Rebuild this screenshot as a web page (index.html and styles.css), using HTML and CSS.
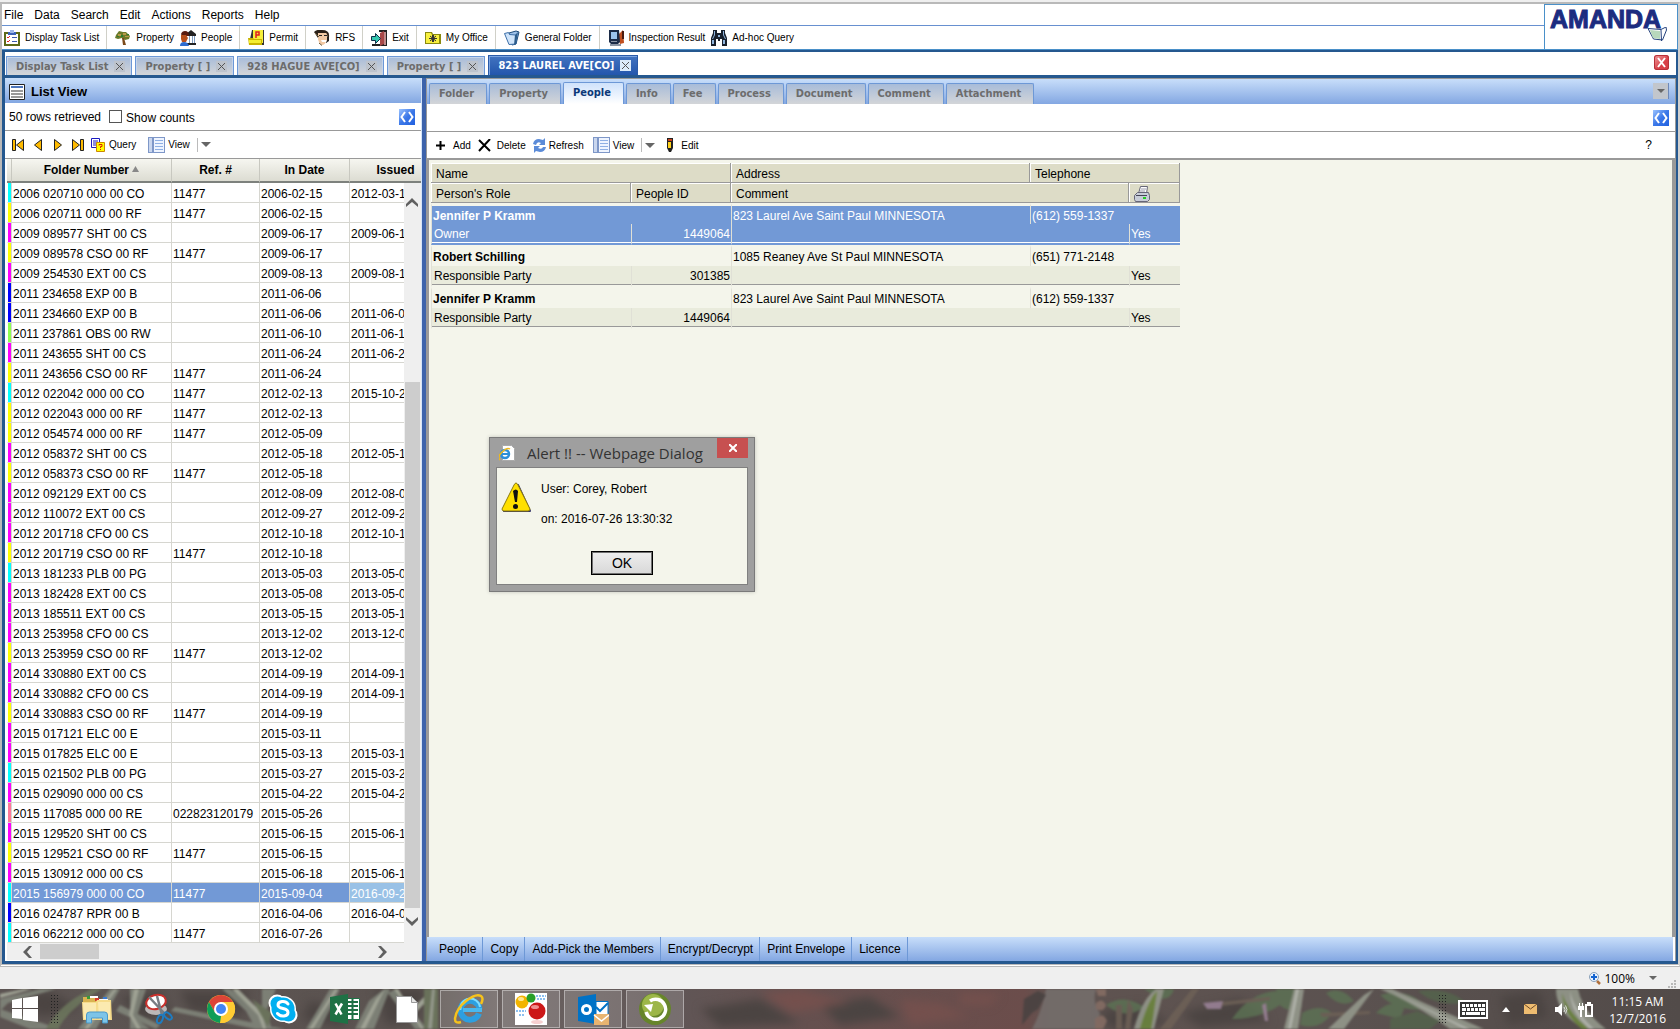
FILE: index.html
```html
<!DOCTYPE html>
<html lang="en">

<head>
    <meta charset="UTF-8">
    <meta name="viewport" content="width=device-width, initial-scale=1.0">
    <title>AMANDA</title>
    <link rel="stylesheet" href="styles.css">
</head>

<body>
    <div class="window">
        <header class="top">
            <div class="top-bars">
                <nav class="menu">
                    <button>File</button>
                    <button>Data</button>
                    <button>Search</button>
                    <button>Edit</button>
                    <button>Actions</button>
                    <button>Reports</button>
                    <button>Help</button>
                </nav>
                <div class="toolbar">
                    <div class="group">
                        <button><svg class="icon" viewBox="0 0 16 16"><path fill="#5d6b18" d="M0 2h16v14H0z"/><path fill="#fff" d="M2 4h12v10H2z"/><path fill="#3b62b8" d="M4 2h8v3H4z"/><path fill="#9db6e8" d="M6 0h4v3H6z"/><path fill="none" stroke="#d22" d="M3 7l1 1 2-2M3 11l1 1 2-2"/><path stroke="#3a5ab0" fill="none" d="M8 7.500h5M8 11.500h5"/></svg>Display Task List</button>
                    </div>
                    <div class="group">
                        <button><svg class="icon" viewBox="0 0 16 16"><path fill="#6b7a2a" d="M1 5l3-4 4 1 3 0 4 4-1 3-4 1-3-2-4 1-3-1z"/><path fill="#b79a4a" d="M3 4h3v2H3zM8 3h3v2H8zM10 6h4v1h-4z"/><path fill="#2e7c2e" d="M6 5h2v2H6zM12 4h2v1h-2zM2 6h2v1H2z"/><path fill="#7a4a1c" d="M7 8h2l2 7H8z"/></svg>Property</button>
                        <button><svg class="icon" viewBox="0 0 16 16"><path fill="#222" d="M6 4l5-4 5 4v2H6zM7 13h9v2H7z"/><path fill="#7f9cc0" d="M9 6h1v7H9zM12 6h1v7h-1zM14 6h1v7h-1z"/><path fill="#5a1c10" d="M1 4q1-3 4-3 4 0 4 5H2z"/><path fill="#b8501c" d="M1 5h5l2 3-2 4H2l-1-3z"/><path fill="#2d6cd0" d="M0 16q0-4 4-4t5 4z"/></svg>People</button>
                    </div>
                    <div class="group">
                        <button><svg class="icon" viewBox="0 0 16 16"><path fill="#333" d="M4 0h12v15H2V9z"/><path fill="#f6ef3a" d="M5 0h10v13H5z"/><path fill="#c9b400" d="M0 8h5l1 1h8v6H1z"/><path fill="#f4ee30" d="M1 10h12v3H1z"/><path fill="none" stroke="#e02020" stroke-width="1.500" d="M8 8V2h3v3H8"/></svg>Permit</button>
                    </div>
                    <div class="group">
                        <button><svg class="icon" viewBox="0 0 16 16"><path fill="#2a2018" d="M0 2q3-3 8-2 8 0 7 7l-2 3-9-2z"/><path fill="#f0c8a4" d="M4 3h8q2 1 1 7-2 5-5 5-3-1-4-6z"/><path fill="#222" d="M5 5h3v1H5zM10 5h3v1h-3zM13 7h2v4l-3 2v-1l1-1z"/><path fill="#fff" d="M7 10h5v2H8z"/><path fill="none" stroke="#6a5a3a" d="M1 3l4 4M5 13l3 2.500"/></svg>RFS</button>
                    </div>
                    <div class="group">
                        <button><svg class="icon" viewBox="0 0 16 16"><path fill="#222" d="M8 0h8v16h-2V2H8zM1 14h15v2H1z"/><path fill="#c08a8a" d="M13 2h2v13h-2z"/><path fill="#a84848" d="M9 3l4-2v13l-4 2z"/><path fill="#35c8b0" stroke="#10304a" d="M.5 6.500h4v-3l5 5-5 5v-3h-4z"/></svg>Exit</button>
                    </div>
                    <div class="group">
                        <button><svg class="icon" viewBox="0 0 16 16"><path fill="#8a8a10" d="M0 2h7l1 2h8v10H0z"/><path fill="#f8f040" d="M1 3h5l1 2h7v8H1z"/><path fill="#333" d="M4 8h8v1H4zM7 5h2v7H7z"/><path stroke="#333" d="M5 6l6 5M11 6l-6 5"/></svg>My Office</button>
                    </div>
                    <div class="group">
                        <button><svg class="icon" viewBox="0 0 16 16"><path fill="#9cc0e8" stroke="#1c4a7a" d="M5 3l7-2 3 1-3 12-4 1z"/><path fill="#cfe4fa" stroke="#3c6ea8" d="M.5 3.500l4-1 1 2 6 .5.500 9-7 .5z"/><path fill="#2b5c8c" d="M11 5l3-3-2 12-2 1z"/></svg>General Folder</button>
                    </div>
                    <div class="group">
                        <button><svg class="icon" viewBox="0 0 16 16"><path fill="#c05020" d="M10 5l5-5 1 13-4 1z"/><path fill="#4a1c10" d="M14 1h2v8h-2z"/><path fill="#1c2c48" d="M1 0h10l1 12-2 2H3l-2-2z"/><path fill="#9cc4ee" d="M3 2h6v7H3z"/><path fill="#8a94a4" d="M3 11h6v1H3zM2 14h11v2H2z"/></svg>Inspection Result</button>
                        <button><svg class="icon" viewBox="0 0 16 16"><path fill="#18202c" d="M2 0h4v3h4V0h4v3l2 5v8h-5V9H9v2H7V9H5v7H0V8l2-5z"/><path fill="#8fb4dc" d="M3 1h1v4l-2 4H1l2-4zM12 1h1v4l2 4h-1l-2-4zM1 10h2v4H1zM12 10h2v4h-2zM7 5h2v2H7z"/></svg>Ad-hoc Query</button>
                    </div>
                </div>
            </div>
            <div class="brand">
                <span class="brand-name">AMANDA</span>
                <svg class="brand-mark" viewBox="0 0 20 15"><path fill="#fff" stroke="#23407c" d="M1 1.500l13 1 5-2.500.5 3-4 10-9-1z"/><path fill="#b8d8bc" d="M3 3l10 1v8l-7-1z"/><path fill="none" stroke="#23407c" d="M14 3l.5 11"/></svg>
            </div>
        </header>

        <div class="frame">
            <div class="doc-tabs">
                <div class="doc-tab"><a href="#">Display Task List</a><button class="tab-close" aria-label="Close Display Task List"></button></div>
                <div class="doc-tab"><a href="#">Property [ ]</a><button class="tab-close" aria-label="Close Property"></button></div>
                <div class="doc-tab"><a href="#">928 HAGUE AVE[CO]</a><button class="tab-close" aria-label="Close 928 HAGUE AVE"></button></div>
                <div class="doc-tab"><a href="#">Property [ ]</a><button class="tab-close" aria-label="Close Property"></button></div>
                <div class="doc-tab active"><a href="#">823 LAUREL AVE[CO]</a><button class="tab-close" aria-label="Close 823 LAUREL AVE"></button></div>
                <button class="close-all" aria-label="Close all"><svg viewBox="0 0 15 15"><path stroke="#fff" stroke-width="2" d="M4 3l7 9M11 3l-7 9"/></svg></button>
            </div>

            <div class="panels">
                <!-- folder list -->
                <section class="list-panel">
                    <h2 class="panel-title"><svg viewBox="0 0 16 16"><path fill="#fff" stroke="#222" d="M.5.5h15v15H.5z"/><path fill="#4d76bd" d="M2 2h12v2H2z"/><path fill="#999" d="M2 6h12v2H2zM2 9h12v2H2zM2 12h12v2H2z"/></svg>List View</h2>
                    <div class="info-row">
                        <span>50 rows retrieved</span>
                        <input type="checkbox" id="counts">
                        <label for="counts">Show counts</label>
                        <button class="expand" aria-label="Expand"><svg viewBox="0 0 16 16"><path fill="none" stroke="#fff" stroke-width="2" d="M6 3L2.500 8 6 13M10 3l3.500 5-3.500 5"/></svg></button>
                    </div>
                    <div class="tools">
                        <button aria-label="First"><svg class="nav" viewBox="0 0 14 14"><path fill="#fb0" stroke="#222" d="M1.500 1.500h3v11h-3zM12.500 1.500v11L5.500 7z"/></svg></button>
                        <button aria-label="Previous"><svg class="nav" viewBox="0 0 14 14"><path fill="#fb0" stroke="#222" d="M10.500 1.500v11L3.500 7z"/></svg></button>
                        <button aria-label="Next"><svg class="nav" viewBox="0 0 14 14"><path fill="#fb0" stroke="#222" d="M3.500 1.500v11l7-5.500z"/></svg></button>
                        <button aria-label="Last"><svg class="nav" viewBox="0 0 14 14"><path fill="#fb0" stroke="#222" d="M1.500 1.500v11l7-5.500zM9.500 1.500h3v11h-3z"/></svg></button>
                        <button class="query"><svg viewBox="0 0 14 14"><path fill="#fff" stroke="#1a1ac0" d="M.5.5h8v9h-8z"/><path stroke="#1a1ac0" d="M2 3h5M2 5h5M2 7h3"/><path fill="#ff0" stroke="#c80" d="M5.500 4.500h8v9h-8z"/><path fill="none" stroke="#d20" d="M8 7.500V6.500h3v2H9.500v1.500M9.500 11v1"/></svg>Query</button>
                        <button class="view"><svg class="view-icon" viewBox="0 0 17 16"><path fill="#7e97c8" d="M0 0h17v16H0z"/><path fill="#c9d6ee" d="M1 1h3v14H1z"/><path fill="#eef4ff" d="M6 1h10v14H6z"/><path stroke="#8fb0e4" d="M7 3.500h8M7 6.500h8M7 9.500h8M7 12.500h8"/></svg>View</button>
                        <button class="drop" aria-label="View options"></button>
                    </div>
                    <div class="list">
                        <table class="folders">
                            <colgroup><col class="c-flag"><col class="c-num"><col class="c-ref"><col class="c-date"><col class="c-issued"></colgroup>
                            <thead>
                                <tr><th></th><th>Folder Number <svg class="sort" viewBox="0 0 7 6"><path fill="#888" d="M3.500 0L7 6H0z"/></svg></th><th>Ref. #</th><th>In Date</th><th>Issued</th></tr>
                            </thead>
                            <tbody>
                                <tr class="cyan"><td></td><td>2006 020710 000 00 CO</td><td>11477</td><td>2006-02-15</td><td>2012-03-13</td></tr>
                                <tr class="yellow"><td></td><td>2006 020711 000 00 RF</td><td>11477</td><td>2006-02-15</td><td></td></tr>
                                <tr class="magenta"><td></td><td>2009 089577 SHT 00 CS</td><td></td><td>2009-06-17</td><td>2009-06-17</td></tr>
                                <tr class="yellow"><td></td><td>2009 089578 CSO 00 RF</td><td>11477</td><td>2009-06-17</td><td></td></tr>
                                <tr class="magenta"><td></td><td>2009 254530 EXT 00 CS</td><td></td><td>2009-08-13</td><td>2009-08-13</td></tr>
                                <tr class="blue"><td></td><td>2011 234658 EXP 00 B</td><td></td><td>2011-06-06</td><td></td></tr>
                                <tr class="blue"><td></td><td>2011 234660 EXP 00 B</td><td></td><td>2011-06-06</td><td>2011-06-06</td></tr>
                                <tr class="green"><td></td><td>2011 237861 OBS 00 RW</td><td></td><td>2011-06-10</td><td>2011-06-10</td></tr>
                                <tr class="magenta"><td></td><td>2011 243655 SHT 00 CS</td><td></td><td>2011-06-24</td><td>2011-06-24</td></tr>
                                <tr class="yellow"><td></td><td>2011 243656 CSO 00 RF</td><td>11477</td><td>2011-06-24</td><td></td></tr>
                                <tr class="cyan"><td></td><td>2012 022042 000 00 CO</td><td>11477</td><td>2012-02-13</td><td>2015-10-20</td></tr>
                                <tr class="yellow"><td></td><td>2012 022043 000 00 RF</td><td>11477</td><td>2012-02-13</td><td></td></tr>
                                <tr class="yellow"><td></td><td>2012 054574 000 00 RF</td><td>11477</td><td>2012-05-09</td><td></td></tr>
                                <tr class="magenta"><td></td><td>2012 058372 SHT 00 CS</td><td></td><td>2012-05-18</td><td>2012-05-18</td></tr>
                                <tr class="yellow"><td></td><td>2012 058373 CSO 00 RF</td><td>11477</td><td>2012-05-18</td><td></td></tr>
                                <tr class="magenta"><td></td><td>2012 092129 EXT 00 CS</td><td></td><td>2012-08-09</td><td>2012-08-09</td></tr>
                                <tr class="magenta"><td></td><td>2012 110072 EXT 00 CS</td><td></td><td>2012-09-27</td><td>2012-09-27</td></tr>
                                <tr class="magenta"><td></td><td>2012 201718 CFO 00 CS</td><td></td><td>2012-10-18</td><td>2012-10-18</td></tr>
                                <tr class="yellow"><td></td><td>2012 201719 CSO 00 RF</td><td>11477</td><td>2012-10-18</td><td></td></tr>
                                <tr class="cyan"><td></td><td>2013 181233 PLB 00 PG</td><td></td><td>2013-05-03</td><td>2013-05-03</td></tr>
                                <tr class="magenta"><td></td><td>2013 182428 EXT 00 CS</td><td></td><td>2013-05-08</td><td>2013-05-08</td></tr>
                                <tr class="magenta"><td></td><td>2013 185511 EXT 00 CS</td><td></td><td>2013-05-15</td><td>2013-05-15</td></tr>
                                <tr class="magenta"><td></td><td>2013 253958 CFO 00 CS</td><td></td><td>2013-12-02</td><td>2013-12-02</td></tr>
                                <tr class="yellow"><td></td><td>2013 253959 CSO 00 RF</td><td>11477</td><td>2013-12-02</td><td></td></tr>
                                <tr class="magenta"><td></td><td>2014 330880 EXT 00 CS</td><td></td><td>2014-09-19</td><td>2014-09-19</td></tr>
                                <tr class="magenta"><td></td><td>2014 330882 CFO 00 CS</td><td></td><td>2014-09-19</td><td>2014-09-19</td></tr>
                                <tr class="yellow"><td></td><td>2014 330883 CSO 00 RF</td><td>11477</td><td>2014-09-19</td><td></td></tr>
                                <tr class="magenta"><td></td><td>2015 017121 ELC 00 E</td><td></td><td>2015-03-11</td><td></td></tr>
                                <tr class="magenta"><td></td><td>2015 017825 ELC 00 E</td><td></td><td>2015-03-13</td><td>2015-03-13</td></tr>
                                <tr class="cyan"><td></td><td>2015 021502 PLB 00 PG</td><td></td><td>2015-03-27</td><td>2015-03-27</td></tr>
                                <tr class="magenta"><td></td><td>2015 029090 000 00 CS</td><td></td><td>2015-04-22</td><td>2015-04-22</td></tr>
                                <tr class="pink"><td></td><td>2015 117085 000 00 RE</td><td>022823120179</td><td>2015-05-26</td><td></td></tr>
                                <tr class="magenta"><td></td><td>2015 129520 SHT 00 CS</td><td></td><td>2015-06-15</td><td>2015-06-15</td></tr>
                                <tr class="yellow"><td></td><td>2015 129521 CSO 00 RF</td><td>11477</td><td>2015-06-15</td><td></td></tr>
                                <tr class="magenta"><td></td><td>2015 130912 000 00 CS</td><td></td><td>2015-06-18</td><td>2015-06-18</td></tr>
                                <tr class="cyan selected"><td></td><td>2015 156979 000 00 CO</td><td>11477</td><td>2015-09-04</td><td>2016-09-20</td></tr>
                                <tr class="blue"><td></td><td>2016 024787 RPR 00 B</td><td></td><td>2016-04-06</td><td>2016-04-06</td></tr>
                                <tr class="cyan"><td></td><td>2016 062212 000 00 CO</td><td>11477</td><td>2016-07-26</td><td></td></tr>
                            </tbody>
                        </table>
                        <div class="vscroll">
                            <svg viewBox="0 0 12 10"><path fill="#606060" d="M0 9V6l6-6 6 6v3L6 4z"/></svg>
                            <div class="thumb"></div>
                            <svg viewBox="0 0 12 10"><path fill="#606060" d="M0 1v3l6 6 6-6V1L6 6z"/></svg>
                        </div>
                    </div>
                    <div class="hscroll">
                        <svg viewBox="0 0 10 12"><path fill="#606060" d="M9 0H6L0 6l6 6h3L4 6z"/></svg>
                        <div class="thumb"></div>
                        <svg viewBox="0 0 10 12"><path fill="#606060" d="M1 0h3l6 6-6 6H1l5-6z"/></svg>
                    </div>
                </section>

                <div class="splitter"></div>

                <!-- folder details -->
                <section class="detail-panel">
                    <nav class="sub-tabs">
                        <a href="#">Folder</a>
                        <a href="#">Property</a>
                        <a href="#" class="active">People</a>
                        <a href="#">Info</a>
                        <a href="#">Fee</a>
                        <a href="#">Process</a>
                        <a href="#">Document</a>
                        <a href="#">Comment</a>
                        <a href="#">Attachment</a>
                        <button class="more" aria-label="More tabs"></button>
                    </nav>
                    <div class="info-row">
                        <button class="expand" aria-label="Expand"><svg viewBox="0 0 16 16"><path fill="none" stroke="#fff" stroke-width="2" d="M6 3L2.500 8 6 13M10 3l3.500 5-3.500 5"/></svg></button>
                    </div>
                    <div class="tools">
                        <button class="add"><svg viewBox="0 0 9 9"><path stroke="#000" stroke-width="2" d="M4.500 0v9M0 4.500h9"/></svg>Add</button>
                        <button class="delete"><svg viewBox="0 0 13 13"><path stroke="#000" stroke-width="2" d="M1 1l11 11M12 0L1 12"/></svg>Delete</button>
                        <button class="refresh"><svg viewBox="0 0 13 15"><path fill="#5b8bd8" d="M0 6q1-5 6-5l4 1 2-2v7H6l2-2q-4-2-5 2zM13 9q-1 5-6 5l-4-1-2 2V8h6l-2 2q4 2 5-1z"/></svg>Refresh</button>
                        <button class="view"><svg class="view-icon" viewBox="0 0 17 16"><path fill="#7e97c8" d="M0 0h17v16H0z"/><path fill="#c9d6ee" d="M1 1h3v14H1z"/><path fill="#eef4ff" d="M6 1h10v14H6z"/><path stroke="#8fb0e4" d="M7 3.500h8M7 6.500h8M7 9.500h8M7 12.500h8"/></svg>View</button>
                        <button class="drop" aria-label="View options"></button>
                        <button class="edit"><svg viewBox="0 0 6 14"><path fill="#222" d="M0 0h6v10l-2 4H2l-2-4z"/><path fill="#c8401c" d="M1 1h4v2H1z"/><path fill="#ffd21c" d="M1 4h3v6H1z"/></svg>Edit</button>
                        <button class="help">?</button>
                    </div>
                    <div class="detail-body">
                        <table class="people">
                            <colgroup><col class="p-role"><col class="p-id"><col class="p-address"><col class="p-phone"><col class="p-print"></colgroup>
                            <thead>
                                <tr><th colspan="2">Name</th><th>Address</th><th colspan="2">Telephone</th></tr>
                                <tr><th>Person's Role</th><th>People ID</th><th colspan="2">Comment</th><th><svg class="printer" viewBox="0 0 16 16"><path fill="#fff" stroke="#667" d="M4.500 7.500l2-7h7l-1 7z"/><path fill="#c8cdd8" stroke="#667" d="M.5 9.500l3-3h11l1 3v4l-2 2h-12l-1-2z"/><path fill="#445" d="M2 9h11v1H2z"/><path fill="#2c2" d="M9 11h3v2H9z"/><path stroke="#99a" d="M7 3h5M6 5h5"/></svg></th></tr>
                            </thead>
                            <tbody class="selected">
                                <tr class="who"><td colspan="2">Jennifer P Kramm</td><td>823 Laurel Ave Saint Paul MINNESOTA</td><td colspan="2">(612) 559-1337</td></tr>
                                <tr class="what"><td>Owner</td><td>1449064</td><td colspan="2"></td><td>Yes</td></tr>
                            </tbody>
                            <tbody>
                                <tr class="who"><td colspan="2">Robert Schilling</td><td>1085 Reaney Ave St Paul MINNESOTA</td><td colspan="2">(651) 771-2148</td></tr>
                                <tr class="what"><td>Responsible Party</td><td>301385</td><td colspan="2"></td><td>Yes</td></tr>
                            </tbody>
                            <tbody>
                                <tr class="who"><td colspan="2">Jennifer P Kramm</td><td>823 Laurel Ave Saint Paul MINNESOTA</td><td colspan="2">(612) 559-1337</td></tr>
                                <tr class="what"><td>Responsible Party</td><td>1449064</td><td colspan="2"></td><td>Yes</td></tr>
                            </tbody>
                        </table>
                    </div>
                    <div class="actions">
                        <button>People</button>
                        <button>Copy</button>
                        <button>Add-Pick the Members</button>
                        <button>Encrypt/Decrypt</button>
                        <button>Print Envelope</button>
                        <button>Licence</button>
                    </div>
                </section>
            </div>
        </div>
    </div>

    <div class="status">
        <svg class="zoom-icon" viewBox="0 0 12 13"><path stroke="#b0703c" stroke-width="2.500" d="M8 9l3 3"/><circle cx="5" cy="5" r="4.500" fill="#e8f2ff" stroke="#8aa0b8"/><path stroke="#1464d0" stroke-width="2" d="M5 2v6M2 5h6"/></svg>
        <span>100%</span>
        <button class="zoom-drop" aria-label="Zoom level"></button>
        <svg class="grip-corner" viewBox="0 0 9 9"><path fill="#b8b8b8" d="M6 0h2v2H6zM3 3h2v2H3zM6 3h2v2H6zM0 6h2v2H0zM3 6h2v2H3zM6 6h2v2H6z"/></svg>
    </div>

    <div class="taskbar">
        <svg class="wallpaper" viewBox="0 0 1680 40" preserveAspectRatio="none">
            <defs>
                <linearGradient id="ground" x1="0" x2="1" y1="0" y2="0">
                    <stop offset="0" stop-color="#5c5452"/>
                    <stop offset=".26" stop-color="#5b5350"/>
                    <stop offset=".3" stop-color="#6c6362"/>
                    <stop offset=".4" stop-color="#605656"/>
                    <stop offset=".48" stop-color="#65504f"/>
                    <stop offset=".61" stop-color="#6b4d4b"/>
                    <stop offset=".625" stop-color="#5f5350"/>
                    <stop offset=".8" stop-color="#5b5250"/>
                    <stop offset="1" stop-color="#524b49"/>
                </linearGradient>
            </defs>
            <path fill="url(#ground)" d="M0 0h1680v40H0z"/>
            <g class="soil">
                <path fill="#4b4442" d="M20 6l30-4 30 18-40 8zM120 8l40-6 10 20-30 10zM180 2h70l-10 24-50-4zM310 12l40 10-8 16-40-8zM375 0h50l-8 30-30 6zM700 20l60-10 40 24-80 4zM820 16l50-8 30 20-60 8zM1100 22l40-6 30 18-60 6zM1180 24l60-14 30 22-70 6zM1500 8l40-6 8 26-40 8z"/>
                <path fill="#74504d" d="M760 4l40-4 50 14-60 10zM900 10l40 4 30 14-60 8zM960 4l40 2-10 10-30 0z"/>
            </g>
            <g class="leaves">
                <path fill="#858b7f" d="M0 10l40-10h16L8 14 0 22zM0 20l60 20H30L0 28zM78 40L110 0h10L96 40zM130 0h16l-10 30 14 10h-20zM120 16l40 20-4 4-40-18zM175 18l110 22h-30l-84-18zM230 0l30 20 8 20h-12l-10-18L222 0zM262 0h14l-10 22 6 18h-10zM306 40L330 0h10l-20 40zM355 40l14-28L384 0h6l-16 40zM395 0l32 40h-12L388 4z"/>
                <path fill="#b1b7a6" d="M0 5l24-5h8L0 9zM84 40l30-40h3L88 40zM134 0h5l-6 26 8 14h-4l-8-14zM238 0l24 24 4 16h-3l-5-14L232 0zM309 40L335 0h3l-25 40zM360 40l16-30 9-10-20 40zM398 0l26 40h-3L394 0zM408 24l20-20 4 2-20 22z"/>
                <path fill="#6e7a5e" d="M46 40Q60 14 92 0h10Q70 18 58 40zM252 10l20 14-4 14zM424 40V0h14v40z"/>
                <path fill="#a2a99a" d="M428 40l4-40h3l-3 40z"/>
                <path fill="#77716f" d="M1046 0h50q-4 14 4 24l-4 16h-64q10-18 14-40z"/>
                <path fill="#464140" d="M1024 10l14-8 8 4-8 14-6 4-10 12z"/>
                <path fill="#8a7066" d="M1096 0h10v7h-8zM1096 14q6-6 10 2-2 8-10 4zM1095 30q8-8 12 2l-4 8h-8z"/>
                <path fill="#5c7354" d="M1106 16q18-12 38 2-18 14-38-2zM1144 0h30q-2 10-14 10zM1232 30q18-26 44-28l4 14q-20 14-48 14zM1276 0h20l6 18q-14 8-24-4zM1302 24q18-10 30 0-12 18-32 12zM1326 4q14-8 28 8-14 8-28-8zM1376 24q16-16 28-4l-4 10zM1380 6q30-8 48 14-30 4-48-14z"/>
                <path fill="#6f6257" d="M1116 16h6v24h-6zM1128 10l5 10-3 20h-5zM1160 40l32-40h7l-28 40zM1210 14l60-6v3l-58 7zM1320 24l50-2v3l-48 3z"/>
                <path fill="#9ba193" d="M1134 40q8-30 22-40h8l-10 40zM1284 40l10-40h10l-6 40zM1328 40l36-34 10-6-30 40zM1380 0h12l92 40h-34q-40-28-70-40zM1556 0h22q4 22 28 40h-22q-28-16-28-40z"/>
                <path fill="#6e8c3c" d="M1140 40q8-28 17-38l-6 38zM1562 4q6 20 26 36h-6q-18-14-20-36z"/>
                <path fill="#c5cac0" d="M1296 0h3l-8 40h-3zM1390 2l80 38h-6zM1570 2q4 20 24 38h-4q-20-16-20-38z"/>
                <path fill="#54654c" d="M1390 30l28-8 22 10-10 8h-40zM1418 2q32-4 48 12-30 4-48-12z"/>
                <path fill="#a288a0" d="M1203 14l20-2-2 8-14 0zM1262 16l4-2 2 18h-3z"/>
            </g>
        </svg>
        <button class="start" aria-label="Start"><svg viewBox="0 0 26 26"><path fill="#fff" d="M0 4l10-2v10H0zM11 2l15-2v12H11zM0 13h10v10L0 22zM11 13h15v13l-15-2z"/></svg></button>
        <div class="grip"></div>
        <div class="apps">
            <button aria-label="File Explorer"><svg viewBox="0 0 32 32"><path fill="#d9b450" d="M2 4h12l2 3h14v20H2z"/><path fill="#3a9a3a" d="M6 3h3v3H6z"/><path fill="#d43a2a" d="M14 5h4v3h-4z"/><path fill="#3a7ad0" d="M22 4h4v4h-4z"/><path fill="#fff" d="M9 3h8v2H9zM18 6h9v2h-9z"/><path fill="#f6dc8c" d="M1 9h14l1-2h14l1 20H2z"/><path fill="#fbeab0" d="M2 10h13v16H3zM17 9h12v17H18z"/><path fill="#7cc4e8" stroke="#4a98c8" d="M5.500 30v-8q0-3 3-3h15q3 0 3 3v8h-5v-5h-11v5z"/></svg></button>
            <button aria-label="Snipping Tool"><svg viewBox="0 0 32 32"><ellipse cx="13" cy="16" rx="11" ry="6" fill="#bcb8b8"/><ellipse cx="13" cy="9" rx="10" ry="7" fill="#fff" stroke="#c8302c" stroke-width="2" transform="rotate(-15 13 9)"/><path stroke="#777c82" stroke-width="2.500" d="M6 4l16 17M14 3l5 19"/><ellipse cx="17" cy="26" rx="2.500" ry="4.500" fill="none" stroke="#1f7cc0" stroke-width="2" transform="rotate(25 17 26)"/><ellipse cx="25" cy="23" rx="2.500" ry="4.500" fill="none" stroke="#1f7cc0" stroke-width="2" transform="rotate(-50 25 23)"/></svg></button>
            <button aria-label="Chrome"><svg viewBox="0 0 32 32"><circle cx="16" cy="16" r="14" fill="#fc3"/><path fill="#dc4437" d="M16 16L3.900 9a14 14 0 0 1 24.200 0z"/><path fill="#dc4437" d="M10 19.500L3.900 9 16 9.500z"/><path fill="#0f9d58" d="M3.900 9L10 19.500l6 3.500-1 7A14 14 0 0 1 3.900 9z"/><path fill="#fc3" d="M16 9h12.100A14 14 0 0 1 15 30l7-10.500z"/><circle cx="16" cy="16" r="7" fill="#fff"/><circle cx="16" cy="16" r="5" fill="#4285f4"/></svg></button>
            <button aria-label="Skype"><svg viewBox="0 0 32 32"><circle cx="10" cy="10" r="8.500" fill="#fff"/><circle cx="22" cy="22" r="8.500" fill="#fff"/><circle cx="16" cy="16" r="13" fill="#fff"/><circle cx="10.500" cy="10.500" r="7" fill="#00aff0"/><circle cx="21.500" cy="21.500" r="7" fill="#00aff0"/><circle cx="16" cy="16" r="11.500" fill="#00aff0"/><path fill="none" stroke="#fff" stroke-width="3" stroke-linecap="round" d="M21 11q-2-3-6-2.500-4 .5-4 3.500 0 2.500 5 3.500t5 4-4 3.500q-4 .5-6.500-2.500"/></svg></button>
            <button aria-label="Excel"><svg viewBox="0 0 32 32"><path fill="#fff" stroke="#1e7145" d="M17.500 5.500h13v21h-13z"/><path stroke="#1e7145" stroke-width="2" d="M18 9h11M18 13h11M18 17h11M18 21h11M23.500 6v20"/><path fill="#1e7145" d="M1 4l18-3v30L1 28z"/><path stroke="#fff" stroke-width="2.500" d="M6.500 10.500l6 11M13 10.500l-6.500 11"/></svg></button>
            <button aria-label="Document"><svg viewBox="0 0 32 32"><path fill="#fff" stroke="#999" d="M5.500 3.500h15l6 6v20h-21z"/><path fill="#e4e4e4" stroke="#999" d="M20.500 3.500v6h6z"/></svg></button>
            <button class="open" aria-label="Internet Explorer"><svg viewBox="0 0 32 32"><path fill="none" stroke="#2d9fe0" stroke-width="6" d="M26 20.500A9.500 9.500 0 1 1 26.500 16"/><path fill="none" stroke="#7fdcff" stroke-width="2" d="M7.500 17A9.500 9.500 0 0 1 27 14"/><path fill="#49b8ee" d="M10 15h19v4H10z"/><path fill="none" stroke="#f6c21c" stroke-width="2.500" d="M28 11q3-6 0-8-5-3-15 5T2 26q0 5 6 3"/></svg></button>
            <button class="open" aria-label="Amanda"><svg viewBox="0 0 32 32"><path fill="#fff" d="M0 0h32v32H0z"/><circle cx="7" cy="9" r="6.500" fill="#f2b400"/><circle cx="16" cy="5" r="4.500" fill="#28a028"/><circle cx="22" cy="18" r="8.500" fill="#cc1818"/><ellipse cx="20" cy="14" rx="4" ry="2" fill="#f09090"/><ellipse cx="6" cy="6" rx="3" ry="2" fill="#ffe690"/><path stroke="#8cc0f0" stroke-width="2" stroke-dasharray="2 1" d="M21 3h10M22 6h8M1 18h10M4 22h6"/><ellipse cx="22" cy="29" rx="6" ry="2" fill="#f6d0d0"/></svg></button>
            <button class="open" aria-label="Outlook"><svg viewBox="0 0 32 32"><path fill="#0072c6" d="M1 4l18-3v30L1 28z"/><circle cx="9.500" cy="16.500" r="4" fill="none" stroke="#fff" stroke-width="3"/><path fill="#fff" stroke="#0072c6" d="M19 8.500h12v13H19z"/><path fill="none" stroke="#0072c6" stroke-width="2" d="M19 14l4 4 8-8"/><path fill="#e8b470" d="M17 21h15v11H17z"/><path fill="none" stroke="#fff" stroke-width="1.500" d="M17 22l7.500 6 7.500-6"/></svg></button>
            <button class="open" aria-label="Sync"><svg viewBox="0 0 32 32"><circle cx="16" cy="16" r="16" fill="#66852a"/><circle cx="14" cy="12" r="11" fill="#9cb648"/><path fill="none" stroke="#fff" stroke-width="3.500" d="M7 19a10 10 0 1 0 4-11"/><path fill="#fff" d="M5 12l9-1-2 8z"/></svg></button>
        </div>
        <div class="tray">
            <div class="grip"></div>
            <svg class="keyboard" viewBox="0 0 30 19"><path fill="#333" stroke="#fff" stroke-width="2" d="M1 1h28v17H1z"/><path fill="#fff" d="M4 4h3v3H4zM8 4h3v3H8zM12 4h3v3h-3zM16 4h3v3h-3zM20 4h3v3h-3zM24 4h3v3h-3zM4 8h4v3H4zM9 8h3v3H9zM13 8h3v3h-3zM17 8h3v3h-3zM21 8h6v3h-6zM4 12h3v3H4zM8 12h14v3H8zM23 12h4v3h-4z"/></svg>
            <svg class="caret" viewBox="0 0 8 5"><path fill="#fff" d="M4 0l4 5H0z"/></svg>
            <svg class="mail" viewBox="0 0 13 10"><path fill="#eebc70" d="M0 0h13v10H0z"/><path fill="none" stroke="#6a4a2a" d="M0 0l6.500 5L13 0"/></svg>
            <svg class="sound" viewBox="0 0 13 13"><path fill="#fff" d="M0 4h3l4-4v13L3 9H0z"/><path fill="none" stroke="#ddd" d="M9 4q2 2.500 0 5M10.500 2.500q3 4 0 8"/></svg>
            <svg class="battery" viewBox="0 0 15 15"><path fill="none" stroke="#fff" stroke-width="2" d="M8 3h6v11H8z"/><path fill="#fff" d="M9 0h4v2H9zM1 1h1v3H1zM4 1h1v3H4zM0 4h6v4H4v7H2V8H0z"/></svg>
            <div class="clock"><span>11:15 AM</span><span>12/7/2016</span></div>
        </div>
    </div>

    <div class="dialog" role="dialog" aria-labelledby="dialog-title">
        <div class="dialog-bar">
            <svg class="dialog-icon" viewBox="0 0 16 16"><path fill="#fff" stroke="#aaa" d="M3.500.5h9l3 3v12h-12z"/><circle cx="6" cy="9" r="4" fill="none" stroke="#2d8fd8" stroke-width="2.500"/><path fill="#2d8fd8" d="M3 8h8v2H3z"/><path fill="none" stroke="#f0b81c" stroke-width="1.500" d="M11 4Q8 2 3 7t-2 8"/></svg>
            <h3 id="dialog-title">Alert !! -- Webpage Dialog</h3>
            <button class="dialog-close" aria-label="Close"><svg viewBox="0 0 8 8"><path stroke="#fff" stroke-width="2" d="M0 0l8 8M8 0L0 8"/></svg></button>
        </div>
        <div class="dialog-body">
            <svg class="warning" viewBox="0 0 31 31"><path fill="#336" stroke="#336" stroke-width="2" stroke-linejoin="round" d="M17 3L3 29h26z"/><path fill="#ffe000" stroke="#8a7a10" stroke-linejoin="round" d="M15 1q-1 0-2 2L1 27q0 2 2 2h24q2 0 2-2L17 3q-1-2-2-2z"/><path fill="#111" d="M12 9q3-3 5 0l-1 11h-2z"/><circle cx="14.500" cy="24.500" r="2.500" fill="#111"/></svg>
            <div class="message">
                <p>User: Corey, Robert</p>
                <p>on: 2016-07-26 13:30:32</p>
            </div>
            <button class="ok">OK</button>
        </div>
    </div>
</body>

</html>
```

FILE: styles.css
```css
* {
    box-sizing: border-box;
}

body {
    margin: 0;
    min-height: 100vh;
    display: flex;
    flex-direction: column;
    background: #efefef;
    color: #000;
    font: 12px "Liberation Sans", Arial, sans-serif;
}

button {
    padding: 0;
    border: 0;
    background: none;
    color: inherit;
    font: inherit;
}

a {
    color: inherit;
    text-decoration: none;
}

svg {
    display: block;
    flex: none;
}

/* browser window */
.window {
    flex: 1;
    display: flex;
    flex-direction: column;
    margin-top: 2px;
    border: 2px solid #b9b9b9;
    border-right-color: #d0d0d0;
    border-bottom: 3px double #b9b9b9;
    background: #fff;
}

.top {
    display: flex;
}

.top-bars {
    flex: 1;
    border-bottom: 1px solid #4a90c9;
}

.menu {
    display: flex;
    gap: 11px;
    height: 22px;
    padding-left: 2px;
    border-bottom: 1px solid #6790d0;
}

.toolbar {
    display: flex;
    height: 23px;
    font-size: 10px;
}

.group {
    display: flex;
    gap: 6px;
    padding: 0 7px 0 8px;
    border-right: 1px solid #d0d0c8;
}

.group:first-child {
    padding-left: 2px;
}

.group:last-child {
    border-right: 0;
}

.group button {
    display: flex;
    align-items: center;
    gap: 5px;
}

.icon {
    width: 16px;
    height: 16px;
}

.brand {
    position: relative;
    width: 134px;
    padding: 1px 0 0 5px;
    border: 1px solid #4a90c9;
}

.brand-name {
    color: #1c2c80;
    font-size: 25px;
    font-weight: bold;
    line-height: 26px;
    -webkit-text-stroke: 1px #1c2c80;
}

.brand-mark {
    position: absolute;
    right: 10px;
    bottom: 7px;
    width: 20px;
    height: 15px;
}

/* open documents */
.frame {
    flex: 1;
    display: flex;
    flex-direction: column;
    border: 3px solid #25588f;
    border-top-width: 2px;
    border-right-width: 2px;
}

.doc-tabs {
    display: flex;
    align-items: flex-end;
    gap: 3px;
    height: 26px;
    padding: 0 7px 0 1px;
    border-bottom: 3px solid #25588f;
    font: bold 11px "DejaVu Sans Condensed", "DejaVu Sans", sans-serif;
}

.doc-tab {
    display: flex;
    align-items: center;
    gap: 6px;
    height: 19px;
    padding: 0 6px 0 9px;
    border: 1px solid #6d98d6;
    border-bottom: 0;
    box-shadow: inset 1px 1px #c5d4ea, inset -1px 0 #c5d4ea;
    background: linear-gradient(#a8bcd9, #d3d5d8);
    color: #6c6c6c;
}

.doc-tab.active {
    height: 20px;
    border-color: #2a5aa8;
    background: linear-gradient(#4273c0, #2356ac);
    box-shadow: inset 1px 1px #7ba4e0;
    color: #fff;
}

.tab-close {
    width: 11px;
    height: 11px;
    border: 2px solid #bdc3cc;
    background:
        linear-gradient(45deg, transparent 45%, #555 45%, #555 55%, transparent 55%),
        linear-gradient(-45deg, transparent 45%, #555 45%, #555 55%, transparent 55%),
        #bdc3cc;
}

.active .tab-close {
    border-color: #dcebfa;
    background-color: #dcebfa;
}

.close-all {
    width: 15px;
    height: 15px;
    margin: 0 0 5px auto;
    border-radius: 3px;
    background: linear-gradient(135deg, #f0a0a0, #d84048 60%);
    box-shadow: inset 0 0 0 1px #b83038;
}

.panels {
    flex: 1;
    display: grid;
    grid-template-columns: 417px 4px 1fr;
}

.splitter {
    background: #3d63ab;
}

/* left panel */
.list-panel {
    display: flex;
    flex-direction: column;
    border-right: 1px solid #d4e4f8;
}

.panel-title {
    display: flex;
    align-items: center;
    gap: 6px;
    height: 25px;
    margin: 0;
    padding: 2px 0 0 4px;
    background: linear-gradient(#c8defa, #83a7e2);
    font-size: 13px;
}

.panel-title svg {
    width: 16px;
    height: 16px;
}

.info-row {
    display: flex;
    align-items: center;
    height: 28px;
    padding: 0 6px 0 4px;
    border-bottom: 1px solid #999;
}

.info-row input {
    appearance: none;
    width: 13px;
    height: 13px;
    margin: 0 4px 0 8px;
    border: 1px solid #555;
    background: #fff;
}

.info-row label {
    padding-top: 2px;
}

.expand {
    width: 16px;
    height: 16px;
    margin-left: auto;
    background: linear-gradient(135deg, #9cc4ff, #3c78e8 50%, #2060e0);
}

.tools {
    display: flex;
    align-items: center;
    height: 28px;
    padding: 0 6px;
    border-bottom: 1px solid #999;
    font-size: 10px;
}

.tools button {
    display: flex;
    align-items: center;
    gap: 4px;
}

.nav {
    width: 14px;
    height: 14px;
    margin-right: 6px;
}

.query svg {
    width: 14px;
    height: 14px;
}

.tools .view {
    gap: 3px;
    margin-left: 12px;
}

.view-icon {
    width: 17px;
    height: 16px;
}

.drop {
    height: 14px;
    margin-left: 7px;
    padding-left: 3px;
    border-left: 1px solid #bbb;
}

.drop::before,
.more::before,
.zoom-drop::before {
    content: "";
    display: block;
    border: 5px solid transparent;
    border-top-color: #666;
    border-bottom: 0;
}

.list {
    position: relative;
    overflow: hidden;
    padding-left: 2px;
}

.folders {
    width: 435px;
    table-layout: fixed;
    border-spacing: 0;
}

.c-flag {
    width: 5px;
}

.c-num {
    width: 160px;
}

.c-ref {
    width: 88px;
}

.c-date {
    width: 90px;
}

.c-issued {
    width: 92px;
}

.folders th {
    height: 24px;
    padding: 0 0 1px;
    border-right: 1px solid #c8c8c0;
    border-bottom: 2px solid #7d817d;
    background: linear-gradient(#f6f6f0, #dcdcd2);
}

.folders td {
    height: 20px;
    padding: 2px 0 0 1px;
    border-right: 1px solid #d6d6d0;
    border-bottom: 1px solid #d6d6d0;
    white-space: nowrap;
}

.folders td:first-child {
    border-left: 1px solid #fff;
}

.sort {
    display: inline-block;
    width: 7px;
    height: 6px;
    vertical-align: 2px;
}

.cyan td:first-child {
    background: #0ff;
}

.yellow td:first-child {
    background: #ff0;
}

.magenta td:first-child {
    background: #f0f;
}

.blue td:first-child {
    background: #00f;
}

.green td:first-child {
    background: #8eff4f;
}

.pink td:first-child {
    background: #ff7898;
}

.folders .selected td:not(:first-child) {
    background: #7299d6;
    color: #fff;
}

.folders .selected td:last-child {
    background: #99c1e6;
}

/* covers the right edge of the rows, below the header */
.vscroll {
    position: absolute;
    top: 24px;
    right: 0;
    bottom: 0;
    width: 17px;
    display: flex;
    flex-direction: column;
    align-items: center;
    padding: 15px 1px 17px 0;
    background: #efefef;
}

.vscroll svg {
    width: 12px;
    height: 10px;
}

.vscroll .thumb {
    width: 15px;
    height: 526px;
    margin: auto 0 8px;
    background: #cdcdcd;
}

.hscroll {
    display: flex;
    align-items: center;
    height: 17px;
    margin: 0 0 1px 2px;
    padding: 0 34px 0 16px;
    background: #efefef;
}

.hscroll svg {
    width: 10px;
    height: 12px;
}

.hscroll .thumb {
    width: 59px;
    height: 15px;
    margin: 0 auto 0 7px;
    background: #cdcdcd;
}

/* right panel */
.detail-panel {
    display: flex;
    flex-direction: column;
    border: 1px solid #999;
    border-bottom: 0;
}

.sub-tabs {
    display: flex;
    align-items: flex-end;
    gap: 2px;
    height: 25px;
    padding: 0 6px 0 2px;
    background: linear-gradient(#c8defa, #83a7e2);
    color: #6c6c6c;
    font: bold 11px/20px "DejaVu Sans Condensed", "DejaVu Sans", sans-serif;
}

.sub-tabs a {
    height: 21px;
    padding: 0 12px 0 9px;
    border: solid #6d98d6;
    border-width: 1px 1px 0;
    border-radius: 2px 2px 0 0;
    background: linear-gradient(#a8bcd9, #d3d5d8);
}

.sub-tabs .active {
    height: 22px;
    background: linear-gradient(#cfe2fb, #fff);
    color: #0c3878;
}

.more {
    width: 16px;
    height: 16px;
    margin: 0 0 5px auto;
    padding: 0 4px;
    border-right: 1px solid #6d88b8;
    background: #c2c6cc;
}

.more::before,
.zoom-drop::before {
    border-width: 4px 4px 0;
}

.detail-panel .tools {
    border-bottom-width: 2px;
}

.detail-panel .info-row {
    padding-right: 6px;
}

.tools .add {
    gap: 8px;
    margin: 0 7px 0 3px;
}

.add svg {
    width: 9px;
    height: 9px;
}

.delete svg {
    width: 13px;
    height: 13px;
}

.tools .delete {
    gap: 6px;
}

.tools .refresh {
    gap: 3px;
    margin-left: 7px;
}

.refresh svg {
    width: 13px;
    height: 15px;
}

.detail-panel .tools .view {
    margin-left: 9px;
}

.tools .edit {
    gap: 8px;
    margin-left: 12px;
}

.edit svg {
    width: 6px;
    height: 14px;
}

.tools .help {
    margin: 0 17px 0 auto;
    font-size: 12px;
}

.detail-body {
    flex: 1;
    padding: 3px 0 0 2px;
    border: solid #999;
    border-width: 0 3px 0 2px;
    background: #f4f5eb;
}

.people {
    width: 749px;
    table-layout: fixed;
    border-spacing: 0;
}

.p-role {
    width: 200px;
}

.p-id {
    width: 100px;
}

.p-address {
    width: 299px;
}

.p-phone {
    width: 99px;
}

.p-print {
    width: 51px;
}

.people th {
    height: 20px;
    padding: 3px 4px 0 5px;
    border: solid #999;
    border-width: 0 1px 1px 0;
    box-shadow: inset 1px 1px #fff;
    background: #dddcc7;
    font-weight: normal;
    line-height: 16px;
    text-align: left;
}

.printer {
    width: 16px;
    height: 16px;
}

.people td {
    height: 21px;
    padding: 0 1px;
    border-left: 1px solid #e0e0d6;
    background-clip: padding-box;
}

.who td {
    border-top: 3px solid transparent;
}

.who td:first-child {
    font-weight: bold;
}

.what td {
    border-bottom: 2px solid transparent;
    box-shadow: inset 0 -1px #999;
    background-color: #e9ebdc;
}

.what td:first-child {
    padding-left: 2px;
}

.what td:nth-child(2) {
    text-align: right;
}

.people .selected td {
    padding-top: 1px;
    background-color: #7299d6;
    color: #fff;
}

.people .selected .what td {
    border-bottom: 2px solid #7299d6;
    box-shadow: inset 0 -1px #fff;
}

.actions {
    display: flex;
    height: 24px;
    padding-left: 5px;
    margin-right: 2px;
    background: linear-gradient(#c8defa, #83a7e2);
}

.actions button {
    padding: 0 6px 0 7px;
    border-right: 1px solid #6d98d6;
}

/* browser status bar */
.status {
    display: flex;
    align-items: center;
    height: 22px;
    padding-right: 3px;
    font-family: "Open Sans", sans-serif;
}

.zoom-icon {
    width: 12px;
    height: 13px;
    margin: 0 3px 0 auto;
}

.zoom-drop {
    margin: 0 11px 0 14px;
}

.grip-corner {
    align-self: flex-end;
    width: 9px;
    height: 9px;
}

/* desktop taskbar */
.taskbar {
    position: relative;
    display: flex;
    align-items: center;
    height: 40px;
    overflow: hidden;
    color: #fff;
}

.wallpaper {
    position: absolute;
    z-index: -1;
    width: 100%;
    height: 100%;
}

.soil {
    filter: blur(5px);
}

.leaves {
    opacity: .8;
    filter: blur(1px);
}

.start {
    padding: 0 12px;
}

.start svg {
    width: 26px;
    height: 26px;
}

.grip {
    width: 8px;
    height: 30px;
    background: radial-gradient(circle, #222 1px, transparent 1px) 0 0 / 3px 3px;
}

.apps {
    display: flex;
    gap: 4px;
    padding-left: 10px;
}

.apps button {
    display: flex;
    align-items: center;
    justify-content: center;
    width: 58px;
    height: 38px;
}

.apps svg {
    width: 32px;
    height: 32px;
}

.apps .open {
    border: 1px solid rgba(255, 255, 255, .4);
    background: rgba(255, 255, 255, .15);
}

.tray {
    display: flex;
    align-items: center;
    margin-left: auto;
    padding-right: 14px;
}

.keyboard {
    width: 30px;
    margin: 0 14px 0 12px;
}

.caret {
    width: 8px;
    margin-right: 14px;
}

.mail {
    width: 13px;
    margin-right: 18px;
}

.sound {
    width: 13px;
    margin-right: 10px;
}

.battery {
    width: 15px;
    margin-right: 16px;
}

.clock {
    display: flex;
    flex-direction: column;
    align-items: center;
    padding-top: 2px;
    font: 12px/17px "Open Sans", sans-serif;
}

/* alert window */
.dialog {
    position: absolute;
    top: 437px;
    left: 489px;
    width: 266px;
    padding: 0 6px 6px;
    border: 1px solid #7a7a7a;
    background: #9f9f9f;
    box-shadow: 0 0 4px rgba(0, 0, 0, .2);
}

.dialog-bar {
    display: flex;
    align-items: center;
    height: 29px;
    padding-left: 3px;
}

.dialog-icon {
    width: 16px;
    height: 16px;
}

.dialog-bar h3 {
    margin: 0 0 0 12px;
    color: #333;
    font: 15px "Open Sans", sans-serif;
    white-space: nowrap;
}

.dialog-close {
    display: flex;
    align-items: center;
    justify-content: center;
    align-self: flex-start;
    width: 31px;
    height: 20px;
    margin-left: auto;
    background: #c75050;
}

.dialog-close svg {
    width: 8px;
    height: 8px;
}

.dialog-body {
    display: grid;
    grid-template-columns: 31px 1fr;
    column-gap: 9px;
    height: 118px;
    padding: 14px 4px 9px;
    border: 1px solid #808080;
    background: #f4f5eb;
}

.warning {
    width: 31px;
    height: 31px;
}

.message p {
    margin: 0 0 16px;
    line-height: 14px;
}

.ok {
    grid-column: 1 / -1;
    justify-self: center;
    align-self: end;
    width: 62px;
    height: 24px;
    border: 1px solid #000;
    background: linear-gradient(#eee, #d8d8d8);
    box-shadow: inset 0 0 0 1px #707070;
    font-size: 14px;
}
```
